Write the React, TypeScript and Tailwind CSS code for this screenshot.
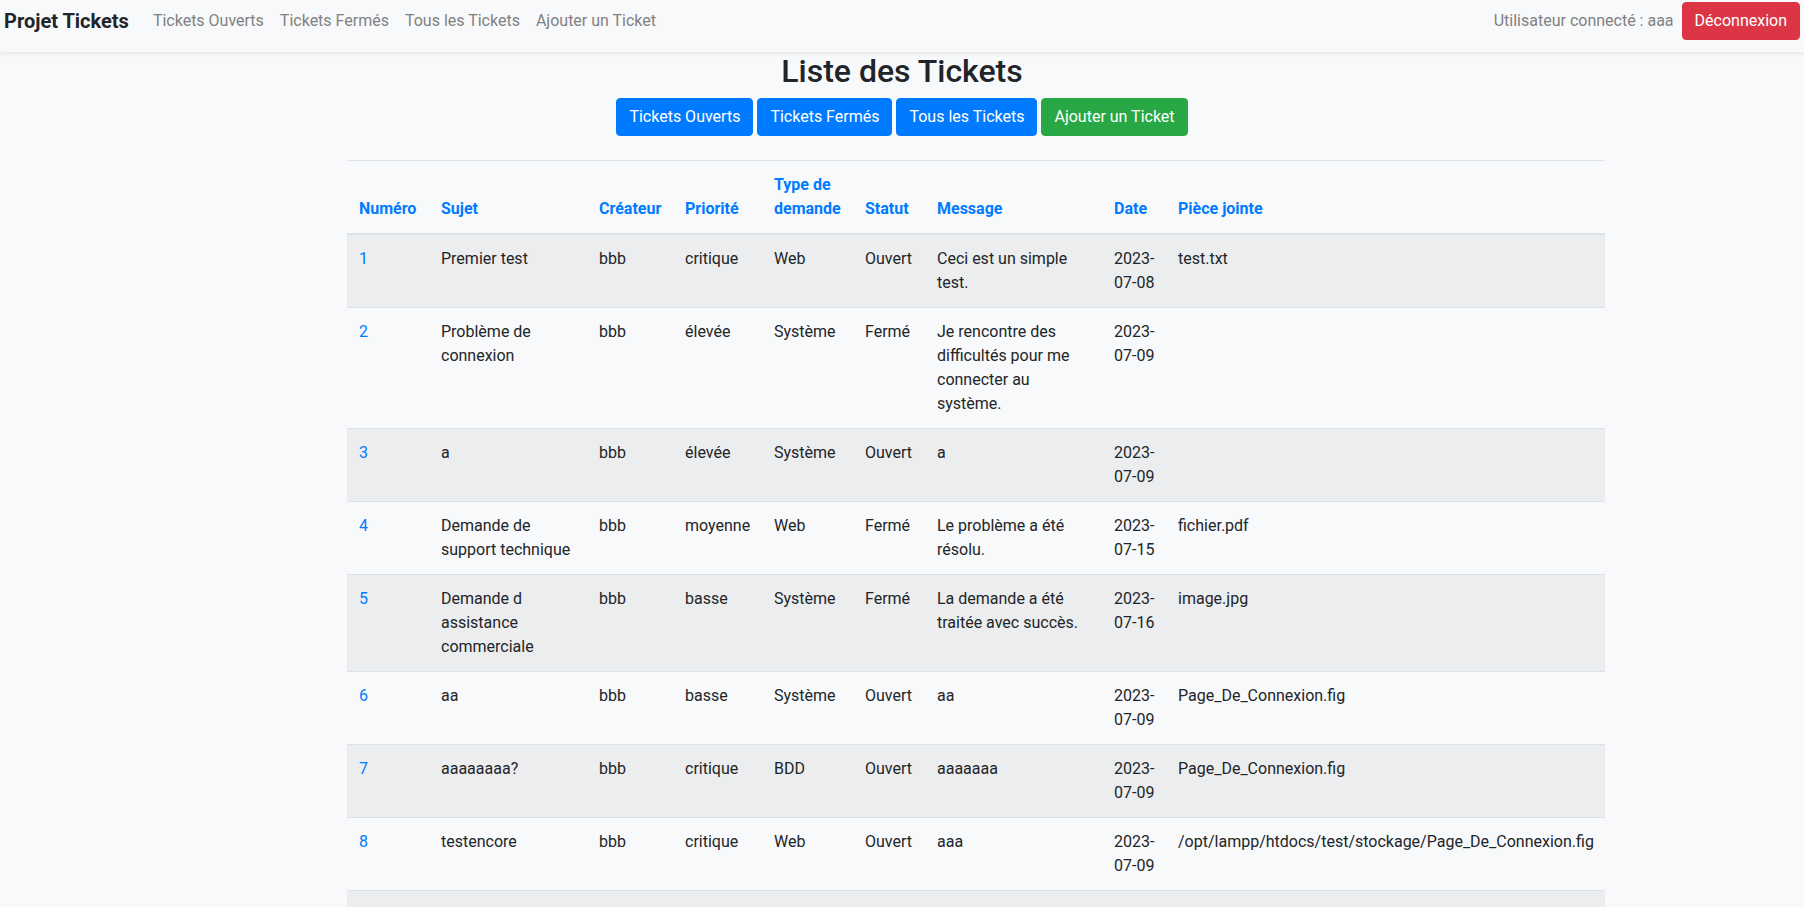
import React from "react";

// ticket row
type Ticket = {
  id: number;
  sujet: string;
  createur: string;
  priorite: string;
  type: string;
  statut: string;
  message: string;
  date: string;
  piece: string;
};

const tickets: Ticket[] = [
  { id: 1, sujet: "Premier test", createur: "bbb", priorite: "critique", type: "Web", statut: "Ouvert", message: "Ceci est un simple test.", date: "2023-07-08", piece: "test.txt" },
  { id: 2, sujet: "Problème de connexion", createur: "bbb", priorite: "élevée", type: "Système", statut: "Fermé", message: "Je rencontre des difficultés pour me connecter au système.", date: "2023-07-09", piece: "" },
  { id: 3, sujet: "a", createur: "bbb", priorite: "élevée", type: "Système", statut: "Ouvert", message: "a", date: "2023-07-09", piece: "" },
  { id: 4, sujet: "Demande de support technique", createur: "bbb", priorite: "moyenne", type: "Web", statut: "Fermé", message: "Le problème a été résolu.", date: "2023-07-15", piece: "fichier.pdf" },
  { id: 5, sujet: "Demande d assistance commerciale", createur: "bbb", priorite: "basse", type: "Système", statut: "Fermé", message: "La demande a été traitée avec succès.", date: "2023-07-16", piece: "image.jpg" },
  { id: 6, sujet: "aa", createur: "bbb", priorite: "basse", type: "Système", statut: "Ouvert", message: "aa", date: "2023-07-09", piece: "Page_De_Connexion.fig" },
  { id: 7, sujet: "aaaaaaaa?", createur: "bbb", priorite: "critique", type: "BDD", statut: "Ouvert", message: "aaaaaaa", date: "2023-07-09", piece: "Page_De_Connexion.fig" },
  { id: 8, sujet: "testencore", createur: "bbb", priorite: "critique", type: "Web", statut: "Ouvert", message: "aaa", date: "2023-07-09", piece: "/opt/lampp/htdocs/test/stockage/Page_De_Connexion.fig" },
];

const headers = [
  { label: "Numéro", w: "w-[82px]" },
  { label: "Sujet", w: "w-[158px]" },
  { label: "Créateur", w: "w-[86px]" },
  { label: "Priorité", w: "w-[89px]" },
  { label: "Type de demande", w: "w-[91px]" },
  { label: "Statut", w: "w-[72px]" },
  { label: "Message", w: "w-[177px]" },
  { label: "Date", w: "w-[64px]" },
  { label: "Pièce jointe", w: "w-[439px]" },
];

const td = "p-3 align-top border-t border-[#dee2e6]";

export default function App() {
  return (
    <div className="min-h-[907px] bg-[#f8f9fa] text-[#212529] text-base leading-6 font-['Roboto','Liberation_Sans',sans-serif] overflow-hidden">
      {/* navbar */}
      <nav className="h-[52px] px-1 pt-[2px] flex justify-between items-start bg-[#f8f9fa] shadow-[0_2px_4px_rgba(0,0,0,0.075)]">
        <div className="flex items-center h-[38px]">
          <a className="text-xl font-bold text-[#212529] mr-4 leading-[30px]">Projet Tickets</a>
          <ul className="flex">
            {["Tickets Ouverts", "Tickets Fermés", "Tous les Tickets", "Ajouter un Ticket"].map((l) => (
              <li key={l}>
                <a className="px-2 text-[#808182]">{l}</a>
              </li>
            ))}
          </ul>
        </div>
        <div className="flex items-center">
          <span className="text-[#808182] mr-2">Utilisateur connecté : aaa</span>
          <button className="bg-[#dc3545] border border-[#dc3545] text-white px-3 py-1.5 rounded">
            Déconnexion
          </button>
        </div>
      </nav>

      <div className="w-[1110px] mx-auto">
        <h2 className="text-[32px] font-medium leading-[1.2] text-center mb-2">Liste des Tickets</h2>
        <div className="flex justify-center gap-[4px] mb-6">
          <button className="bg-[#007bff] border border-[#007bff] text-white px-3 py-1.5 rounded">Tickets Ouverts</button>
          <button className="bg-[#007bff] border border-[#007bff] text-white px-3 py-1.5 rounded">Tickets Fermés</button>
          <button className="bg-[#007bff] border border-[#007bff] text-white px-3 py-1.5 rounded">Tous les Tickets</button>
          <button className="bg-[#28a745] border border-[#28a745] text-white px-3 py-1.5 rounded">Ajouter un Ticket</button>
        </div>

        <table className="w-[1258px] max-w-none table-fixed border-collapse">
          <thead>
            <tr>
              {headers.map((h) => (
                <th
                  key={h.label}
                  className={`${h.w} p-3 align-bottom text-left font-bold border-t border-b-2 border-[#dee2e6]`}
                >
                  <a className="text-[#007bff]">{h.label}</a>
                </th>
              ))}
            </tr>
          </thead>
          <tbody>
            {tickets.map((t, i) => (
              <tr key={t.id} className={i % 2 === 0 ? "bg-[#ecedee]" : ""}>
                <td className={td}>
                  <a className="text-[#007bff]">{t.id}</a>
                </td>
                <td className={td}>{t.sujet}</td>
                <td className={td}>{t.createur}</td>
                <td className={td}>{t.priorite}</td>
                <td className={td}>{t.type}</td>
                <td className={td}>{t.statut}</td>
                <td className={td}>{t.message}</td>
                <td className={td}>
                  {t.date.slice(0, 5)}
                  <span className="whitespace-nowrap">{t.date.slice(5)}</span>
                </td>
                <td className={td}>{t.piece}</td>
              </tr>
            ))}
            <tr className="bg-[#ecedee]">
              <td className={`${td} h-[73px]`}></td>
              <td className={td}></td>
              <td className={td}></td>
              <td className={td}></td>
              <td className={td}></td>
              <td className={td}></td>
              <td className={td}></td>
              <td className={td}></td>
              <td className={td}></td>
            </tr>
          </tbody>
        </table>
      </div>
    </div>
  );
}
